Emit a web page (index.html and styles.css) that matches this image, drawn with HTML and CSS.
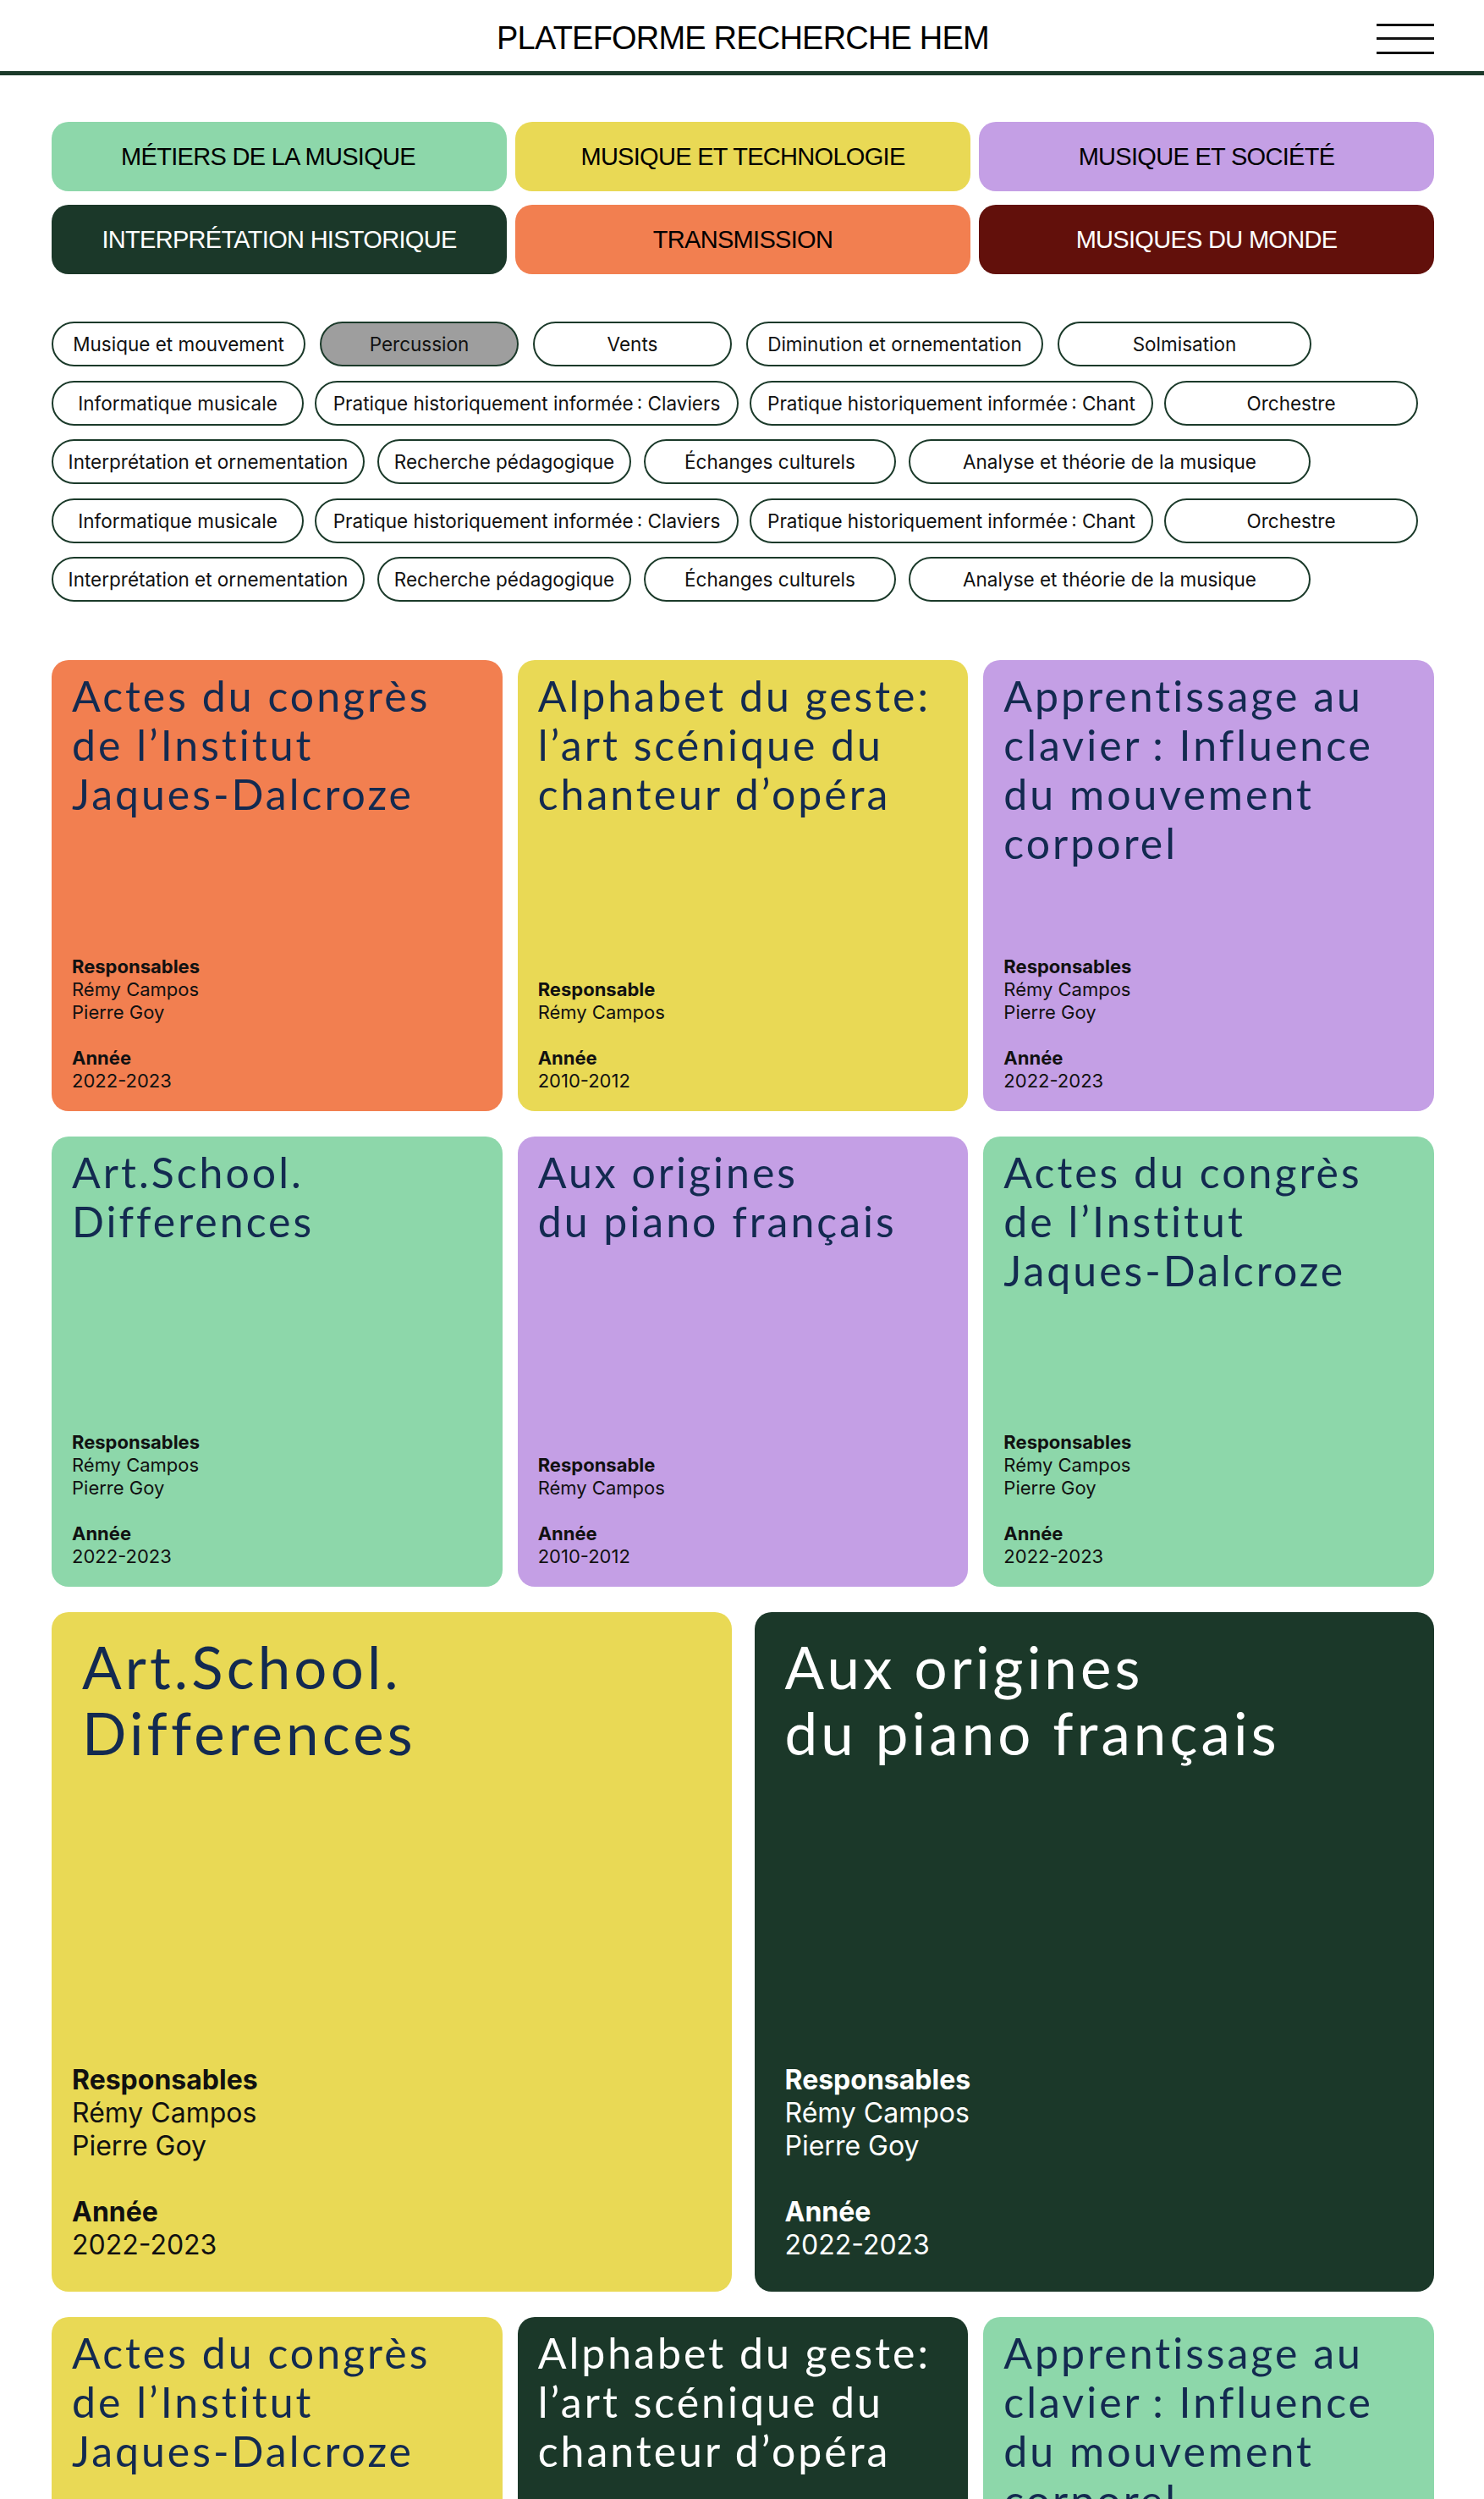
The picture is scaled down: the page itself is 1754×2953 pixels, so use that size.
FILE: index.html
```html
<!DOCTYPE html>
<html lang="fr">
<head>
<meta charset="utf-8">
<title>Plateforme Recherche HEM</title>
<link rel="stylesheet" href="styles.css">
</head>
<body>
<header class="site-header">
  <div class="site-header__spacer"></div>
  <div class="site-title">PLATEFORME RECHERCHE HEM</div>
  <button class="menu-btn" aria-label="Menu"><span></span><span></span><span></span></button>
</header>

<main class="page">
  <nav class="categories">
    <a class="cat cat--mint cat--offset">Métiers de la musique</a>
    <a class="cat cat--yellow">Musique et technologie</a>
    <a class="cat cat--lilac">Musique et société</a>
    <a class="cat cat--forest">Interprétation historique</a>
    <a class="cat cat--orange">Transmission</a>
    <a class="cat cat--maroon">Musiques du monde</a>
  </nav>

  <div class="tags">
    <div class="tag-row tag-row--wide">
      <span class="tag w-300">Musique et mouvement</span>
      <span class="tag tag--active w-235">Percussion</span>
      <span class="tag w-235">Vents</span>
      <span class="tag w-350">Diminution et ornementation</span>
      <span class="tag w-300">Solmisation</span>
    </div>
    <div class="tag-row tag-row--tight">
      <span class="tag w-298">Informatique musicale</span>
      <span class="tag w-500">Pratique historiquement informée&#8239;: Claviers</span>
      <span class="tag w-477">Pratique historiquement informée&#8239;: Chant</span>
      <span class="tag w-300">Orchestre</span>
    </div>
    <div class="tag-row">
      <span class="tag w-370">Interprétation et ornementation</span>
      <span class="tag w-300">Recherche pédagogique</span>
      <span class="tag w-298">Échanges culturels</span>
      <span class="tag w-475">Analyse et théorie de la musique</span>
    </div>
    <div class="tag-row tag-row--tight">
      <span class="tag w-298">Informatique musicale</span>
      <span class="tag w-500">Pratique historiquement informée&#8239;: Claviers</span>
      <span class="tag w-477">Pratique historiquement informée&#8239;: Chant</span>
      <span class="tag w-300">Orchestre</span>
    </div>
    <div class="tag-row">
      <span class="tag w-370">Interprétation et ornementation</span>
      <span class="tag w-300">Recherche pédagogique</span>
      <span class="tag w-298">Échanges culturels</span>
      <span class="tag w-475">Analyse et théorie de la musique</span>
    </div>
  </div>

  <section class="card-stack">
    <div class="cards cards--3">
      <article class="card card--orange">
        <h2 class="card-title">Actes du congrès<br>de l’Institut<br>Jaques-Dalcroze</h2>
        <div class="card-meta">
          <div class="meta-group"><div class="meta-label">Responsables</div><div>Rémy Campos</div><div>Pierre Goy</div></div>
          <div class="meta-group"><div class="meta-label">Année</div><div>2022-2023</div></div>
        </div>
      </article>
      <article class="card card--yellow">
        <h2 class="card-title">Alphabet du geste:<br>l’art scénique du<br>chanteur d’opéra</h2>
        <div class="card-meta">
          <div class="meta-group"><div class="meta-label">Responsable</div><div>Rémy Campos</div></div>
          <div class="meta-group"><div class="meta-label">Année</div><div>2010-2012</div></div>
        </div>
      </article>
      <article class="card card--lilac">
        <h2 class="card-title">Apprentissage au<br>clavier<span class="thin">&#8239;</span>: Influence<br>du mouvement<br>corporel</h2>
        <div class="card-meta">
          <div class="meta-group"><div class="meta-label">Responsables</div><div>Rémy Campos</div><div>Pierre Goy</div></div>
          <div class="meta-group"><div class="meta-label">Année</div><div>2022-2023</div></div>
        </div>
      </article>

      <article class="card card--mint">
        <h2 class="card-title">Art.School.<br>Differences</h2>
        <div class="card-meta">
          <div class="meta-group"><div class="meta-label">Responsables</div><div>Rémy Campos</div><div>Pierre Goy</div></div>
          <div class="meta-group"><div class="meta-label">Année</div><div>2022-2023</div></div>
        </div>
      </article>
      <article class="card card--lilac">
        <h2 class="card-title">Aux origines<br>du piano français</h2>
        <div class="card-meta">
          <div class="meta-group"><div class="meta-label">Responsable</div><div>Rémy Campos</div></div>
          <div class="meta-group"><div class="meta-label">Année</div><div>2010-2012</div></div>
        </div>
      </article>
      <article class="card card--mint">
        <h2 class="card-title">Actes du congrès<br>de l’Institut<br>Jaques-Dalcroze</h2>
        <div class="card-meta">
          <div class="meta-group"><div class="meta-label">Responsables</div><div>Rémy Campos</div><div>Pierre Goy</div></div>
          <div class="meta-group"><div class="meta-label">Année</div><div>2022-2023</div></div>
        </div>
      </article>
    </div>

    <div class="cards cards--2">
      <article class="card card--big card--yellow card--meta-inset">
        <h2 class="card-title">Art.School.<br>Differences</h2>
        <div class="card-meta">
          <div class="meta-group"><div class="meta-label">Responsables</div><div>Rémy Campos</div><div>Pierre Goy</div></div>
          <div class="meta-group"><div class="meta-label">Année</div><div>2022-2023</div></div>
        </div>
      </article>
      <article class="card card--big card--forest">
        <h2 class="card-title">Aux origines<br>du piano français</h2>
        <div class="card-meta">
          <div class="meta-group"><div class="meta-label">Responsables</div><div>Rémy Campos</div><div>Pierre Goy</div></div>
          <div class="meta-group"><div class="meta-label">Année</div><div>2022-2023</div></div>
        </div>
      </article>
    </div>

    <div class="cards cards--3">
      <article class="card card--yellow">
        <h2 class="card-title">Actes du congrès<br>de l’Institut<br>Jaques-Dalcroze</h2>
        <div class="card-meta">
          <div class="meta-group"><div class="meta-label">Responsables</div><div>Rémy Campos</div><div>Pierre Goy</div></div>
          <div class="meta-group"><div class="meta-label">Année</div><div>2022-2023</div></div>
        </div>
      </article>
      <article class="card card--forest">
        <h2 class="card-title">Alphabet du geste:<br>l’art scénique du<br>chanteur d’opéra</h2>
        <div class="card-meta">
          <div class="meta-group"><div class="meta-label">Responsable</div><div>Rémy Campos</div></div>
          <div class="meta-group"><div class="meta-label">Année</div><div>2010-2012</div></div>
        </div>
      </article>
      <article class="card card--mint">
        <h2 class="card-title">Apprentissage au<br>clavier<span class="thin">&#8239;</span>: Influence<br>du mouvement<br>corporel</h2>
        <div class="card-meta">
          <div class="meta-group"><div class="meta-label">Responsables</div><div>Rémy Campos</div><div>Pierre Goy</div></div>
          <div class="meta-group"><div class="meta-label">Année</div><div>2022-2023</div></div>
        </div>
      </article>
    </div>
  </section>
</main>
</body>
</html>
```

FILE: styles.css
```css
* { box-sizing: border-box; }

body {
  margin: 0;
  background: #ffffff;
  color: #111111;
  font-family: Inter, "Liberation Sans", sans-serif;
}

/* Header */
.site-header {
  height: 89px;
  border-bottom: 5px solid #1b3a2a;
  display: grid;
  grid-template-columns: 1fr auto 1fr;
  align-items: center;
  padding: 0 59px 0 61px;
}

.site-title {
  font-family: "Liberation Sans", Arial, sans-serif;
  font-size: 38px;
  letter-spacing: -0.8px;
  color: #000;
  padding-top: 6px;
}

.menu-btn {
  justify-self: end;
  width: 68px;
  display: flex;
  flex-direction: column;
  gap: 13.5px;
  background: none;
  border: 0;
  padding: 0;
  margin-top: 7px;
}

.menu-btn span {
  display: block;
  height: 3px;
  background: #111;
}

/* Page */
.page {
  padding: 0 59px 40px 61px;
}

/* Categories */
.categories {
  margin-top: 55px;
  display: grid;
  grid-template-columns: repeat(3, 1fr);
  gap: 16px 10px;
}

.cat {
  height: 82px;
  border-radius: 20px;
  display: flex;
  align-items: center;
  justify-content: center;
  font-family: "Liberation Sans", Arial, sans-serif;
  font-size: 29px;
  letter-spacing: -0.7px;
  text-transform: uppercase;
  color: #000;
}

.cat--offset { padding-right: 26px; }

.cat--mint { background: #8dd7aa; }
.cat--yellow { background: #e9d955; }
.cat--lilac { background: #c49fe5; }
.cat--forest { background: #1b3829; color: #fff; }
.cat--orange { background: #f27f50; }
.cat--maroon { background: #62100b; color: #fff; }

/* Tags */
.tags {
  margin-top: 56px;
  display: flex;
  flex-direction: column;
  gap: 16.5px;
}

.tag-row {
  display: flex;
  gap: 15px;
}

.tag-row--wide { gap: 17px; }
.tag-row--tight { gap: 13px; }

.tag {
  height: 53px;
  border: 2px solid #1b3a2a;
  border-radius: 999px;
  display: flex;
  align-items: center;
  justify-content: center;
  padding: 0 12px;
  font-size: 22.5px;
  white-space: nowrap;
  background: #fff;
  color: #111;
}

.tag--active { background: #9e9e9e; }

.w-235 { width: 235px; }
.w-298 { width: 298px; }
.w-300 { width: 300px; }
.w-350 { width: 351px; }
.w-370 { width: 370px; }
.w-475 { width: 475px; }
.w-477 { width: 477px; }
.w-500 { width: 501px; }

/* Cards */
.card-stack {
  margin-top: 69px;
  display: flex;
  flex-direction: column;
  gap: 29.5px;
}

.cards {
  display: grid;
}

.cards--3 {
  grid-template-columns: repeat(3, 1fr);
  gap: 30px 18px;
}

.cards--2 {
  grid-template-columns: repeat(2, 1fr);
  gap: 27px;
}

.card {
  aspect-ratio: 1 / 1;
  border-radius: 20px;
  display: flex;
  flex-direction: column;
  justify-content: space-between;
  padding: 13px 24px 22px;
  color: #111;
}

.card-title {
  margin: 0;
  font-family: Lato, "Liberation Sans", sans-serif;
  font-weight: 400;
  font-size: 50px;
  line-height: 58px;
  letter-spacing: 0.06em;
  color: #132a50;
}

.card-title .thin { letter-spacing: 0; }

.card-meta {
  font-size: 22px;
  line-height: 27px;
}

.meta-group + .meta-group { margin-top: 27px; }

.meta-label { font-weight: 700; }

.card--big {
  padding: 26px 36px 36px;
}

.card--big .card-title {
  font-size: 69px;
  line-height: 78px;
}

.card--big .card-meta {
  font-size: 32px;
  line-height: 39px;
}

.card--big .meta-group + .meta-group { margin-top: 39px; }

.card--meta-inset .card-meta { margin-left: -12px; }

.card--orange { background: #f27f50; }
.card--yellow { background: #e9d955; }
.card--lilac { background: #c49fe5; }
.card--mint { background: #8dd7aa; }
.card--forest { background: #1b3829; color: #fff; }
.card--forest .card-title { color: #fff; }
```
